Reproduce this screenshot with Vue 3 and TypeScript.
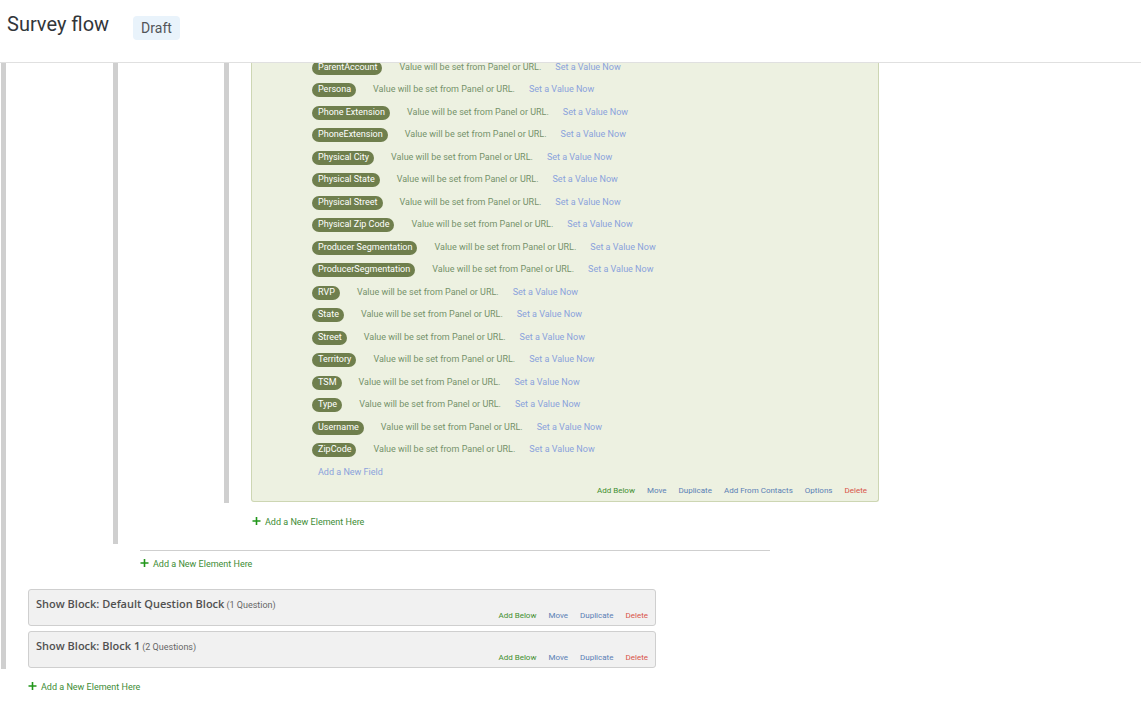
<script setup lang="ts">
interface Action {
  label: string
  tone: 'add' | 'edit' | 'delete'
}

interface Block {
  name: string
  count: string
}

const fields: string[] = [
  'ParentAccount',
  'Persona',
  'Phone Extension',
  'PhoneExtension',
  'Physical City',
  'Physical State',
  'Physical Street',
  'Physical Zip Code',
  'Producer Segmentation',
  'ProducerSegmentation',
  'RVP',
  'State',
  'Street',
  'Territory',
  'TSM',
  'Type',
  'Username',
  'ZipCode',
]

const embeddedActions: Action[] = [
  { label: 'Add Below', tone: 'add' },
  { label: 'Move', tone: 'edit' },
  { label: 'Duplicate', tone: 'edit' },
  { label: 'Add From Contacts', tone: 'edit' },
  { label: 'Options', tone: 'edit' },
  { label: 'Delete', tone: 'delete' },
]

const blockActions: Action[] = [
  { label: 'Add Below', tone: 'add' },
  { label: 'Move', tone: 'edit' },
  { label: 'Duplicate', tone: 'edit' },
  { label: 'Delete', tone: 'delete' },
]

const blocks: Block[] = [
  { name: 'Show Block: Default Question Block', count: '(1 Question)' },
  { name: 'Show Block: Block 1', count: '(2 Questions)' },
]
</script>

<template>
  <div class="page">
    <header class="top">
      <h1>Survey flow</h1>
      <span class="status">Draft</span>
    </header>

    <main class="flow">
      <div class="group root">
        <div class="group nested">
          <div class="group nested">
            <section class="panel embedded">
              <ul class="fields">
                <li v-for="field in fields" :key="field">
                  <button type="button" class="pill">{{ field }}</button>
                  <span class="source">Value will be set from Panel or URL.</span>
                  <a href="#" class="soft">Set a Value Now</a>
                </li>
                <li><a href="#" class="soft new-field">Add a New Field</a></li>
              </ul>
              <nav class="actions" aria-label="Embedded data actions">
                <a v-for="a in embeddedActions" :key="a.label" href="#" :class="a.tone">{{ a.label }}</a>
              </nav>
            </section>
          </div>
          <a href="#" class="add-element inner">
            <svg viewBox="0 0 9 12" aria-hidden="true"><path d="M4.5 1v8M0.5 5h8" /></svg>
            Add a New Element Here
          </a>
        </div>

        <div class="branch-end">
          <a href="#" class="add-element">
            <svg viewBox="0 0 9 12" aria-hidden="true"><path d="M4.5 1v8M0.5 5h8" /></svg>
            Add a New Element Here
          </a>
        </div>

        <section v-for="b in blocks" :key="b.name" class="panel block">
          <h2>{{ b.name }}<small>{{ b.count }}</small></h2>
          <nav class="actions" :aria-label="b.name + ' actions'">
            <a v-for="a in blockActions" :key="a.label" href="#" :class="a.tone">{{ a.label }}</a>
          </nav>
        </section>
      </div>
      <a href="#" class="add-element last">
        <svg viewBox="0 0 9 12" aria-hidden="true"><path d="M4.5 1v8M0.5 5h8" /></svg>
        Add a New Element Here
      </a>
    </main>
  </div>
</template>

<style>
body {
  margin: 0;
  background: #fff;
}
</style>

<style scoped>
.page {
  font-family: Roboto, 'Liberation Sans', sans-serif;
  font-size: 9px;
  line-height: 12px;
  color: #555;
}

a {
  text-decoration: none;
}

.top {
  display: flex;
  align-items: flex-start;
  gap: 24px;
  box-sizing: border-box;
  height: 63px;
  padding: 12px 7px 0;
  border-bottom: 1px solid #e0e0e0;
}

h1 {
  margin: 0;
  font: 400 20px/24px Roboto, 'Liberation Sans', sans-serif;
  color: #32363a;
}

.status {
  margin-top: 4px;
  padding: 0 8px;
  border-radius: 4px;
  background: #e9f3fb;
  font-size: 14px;
  line-height: 24px;
  color: #525558;
}

.flow {
  overflow: hidden;
  padding: 0 1px 24px;
}

.group {
  border-left: 5px solid #cfcfcf;
  padding: 0 0 1px 22px;
}

.nested {
  margin-left: 85px;
}

.nested .nested {
  margin-left: 84px;
}

.panel {
  box-sizing: border-box;
  max-width: 628px;
  border: 1px solid #cfcfcf;
  border-radius: 3px;
  background: #f1f1f1;
}

.embedded {
  border-color: #cdd6b3;
  border-top: 0;
  border-radius: 0 0 3px 3px;
  background: #edf1e1;
  padding-bottom: 4px;
}

.fields {
  list-style: none;
  margin: -8px 0 0;
  padding: 0 0 0 60px;
}

.fields li {
  display: flex;
  align-items: center;
  height: 23px;
}

.fields li:nth-child(even) {
  height: 22px;
}

.pill {
  height: 14px;
  margin: 2px 17px 0 0;
  padding: 0 5px 2px 6px;
  border: 0;
  border-radius: 7px;
  background: #6f7f4d;
  font: 400 9px/12px Roboto, 'Liberation Sans', sans-serif;
  color: #fff;
}

.source {
  margin-right: 14px;
  color: #75916a;
}

.soft {
  color: #8aa2dc;
}

.new-field {
  margin-left: 6px;
}

.actions {
  display: flex;
  justify-content: flex-end;
  gap: 12px;
  padding-right: 11px;
  font-size: 8px;
}

.embedded .actions {
  margin-top: 2px;
}

.add {
  color: #3f8f2f;
}

.edit {
  color: #5a80b5;
}

.delete {
  color: #d9534a;
}

.add-element {
  display: flex;
  align-items: center;
  gap: 4px;
  width: max-content;
  color: #3d8c35;
}

.add-element svg {
  width: 9px;
  height: 12px;
  fill: none;
  stroke: #21961a;
  stroke-width: 1.6;
}

.inner {
  margin-left: 112px;
  padding: 13px 0 15px;
}

.branch-end {
  max-width: 630px;
  margin: 6px 0 19px 112px;
  padding-top: 7px;
  border-top: 1px solid #cfcfcf;
}

.block {
  padding: 7px 0 3px 7px;
}

.block .actions {
  padding-right: 7px;
  margin-top: -1px;
}

.block + .block {
  margin-top: 5px;
}

h2 {
  margin: 0;
  font: 600 11px/14px 'Open Sans', 'Noto Sans', sans-serif;
  color: #505050;
}

small {
  margin-left: 2px;
  font: 400 9px/12px Roboto, 'Liberation Sans', sans-serif;
  color: #666;
}

.last {
  margin: 12px 0 0 27px;
}
</style>
